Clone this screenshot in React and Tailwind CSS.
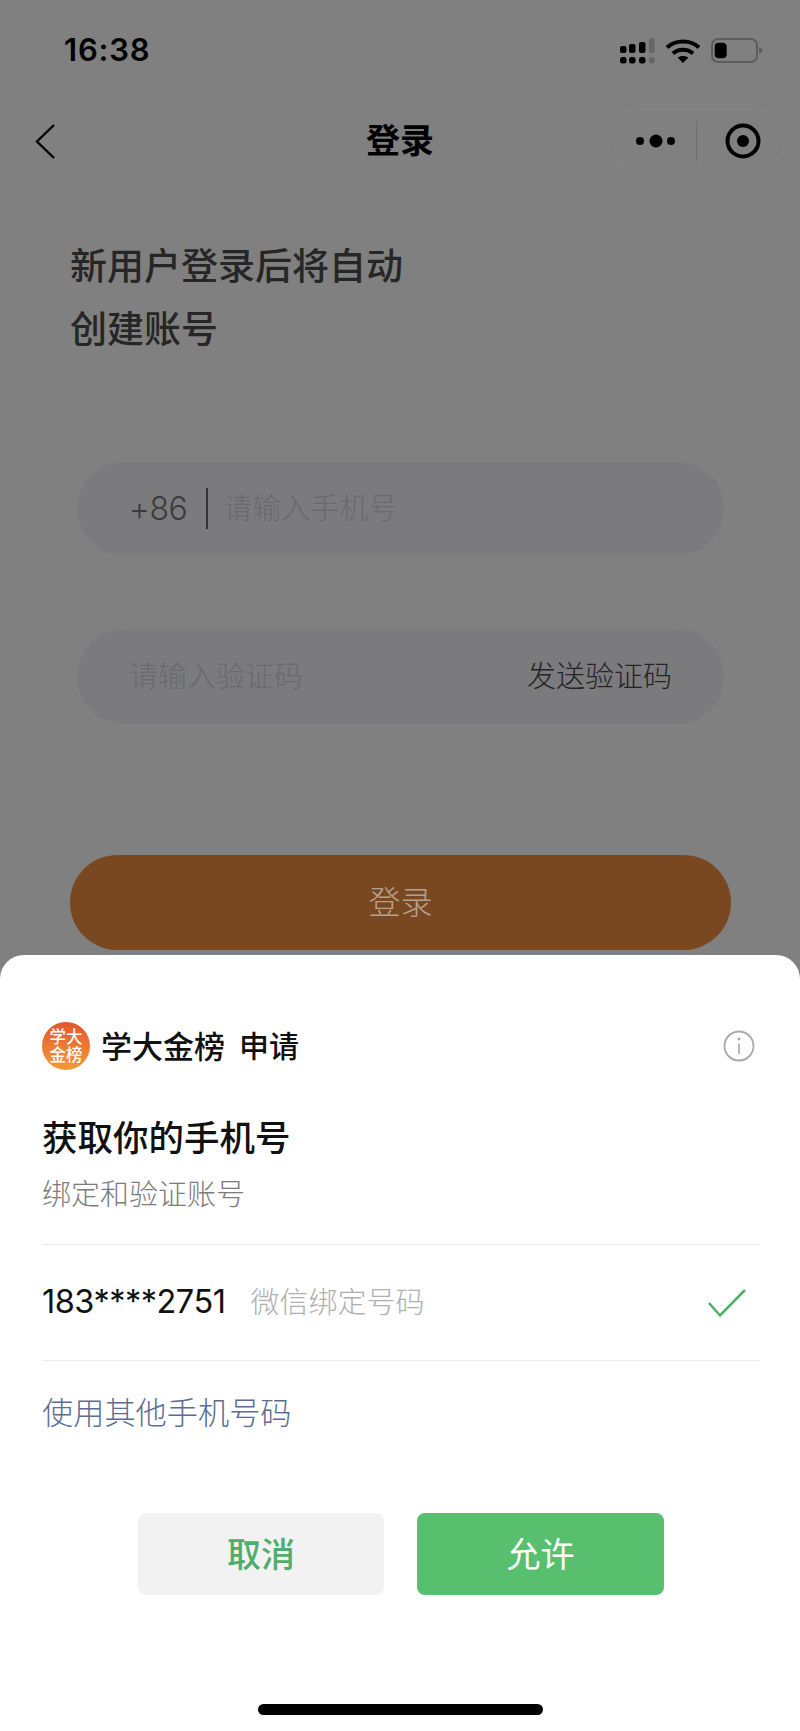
const CJK = "font-['Inter','Noto_Sans_CJK_SC',sans-serif]";

function SignalIcon() {
  const top = [[1, 8, 7], [10, 6, 9], [20, 4, 11]];
  const low = [1, 10, 20];
  return (
    <svg width="36" height="26" viewBox="0 0 36 26">
      {top.map(([x, y, h]) => (
        <rect key={x} x={x} y={y} width="6.500" height={h} rx="2" fill="#000" />
      ))}
      <rect x="30" y="0" width="5.500" height="15" rx="2.500" fill="#666" />
      {low.map((x) => (
        <rect key={x} x={x} y="19" width="6.500" height="6.500" rx="2.500" fill="#000" />
      ))}
      <rect x="30" y="19" width="5.500" height="6.500" rx="2.500" fill="#666" />
    </svg>
  );
}

function WifiIcon() {
  return (
    <svg width="36" height="26" viewBox="0 0 36 26" fill="none" stroke="#000" strokeWidth="4">
      <path d="M2 9.500C10.500 1.500 25.500 1.500 34 9.500" />
      <path d="M8 15.500C13.500 10.500 22.500 10.500 28 15.500" />
      <path d="M17.900 25L12.500 19.600C15.500 17.300 20.500 17.300 23.500 19.600Z" fill="#000" stroke="none" />
    </svg>
  );
}

function BatteryIcon() {
  return (
    <svg width="52" height="26" viewBox="0 0 52 26">
      <rect x="1" y="1" width="45" height="23" rx="6" fill="none" stroke="#5c5c5c" strokeWidth="2" />
      <rect x="3.700" y="4.700" width="12" height="15.500" rx="4" fill="#000" />
      <path d="M48 9.500C50 10.200 51.500 11.200 51.500 12.500C51.500 13.800 50 14.800 48 15.500Z" fill="#5c5c5c" />
    </svg>
  );
}

function StatusBar() {
  return (
    <div className="h-[100px] pt-[34px] pl-[64px] pr-[37px] flex items-start justify-between">
      <span className="font-['Inter',sans-serif] font-semibold text-[31px] leading-[32px] text-black tracking-[0.8px]">16:38</span>
      <div className="flex items-center gap-[10px] pt-[4px]">
        <SignalIcon />
        <WifiIcon />
        <BatteryIcon />
      </div>
    </div>
  );
}

function NavBar() {
  return (
    <div className="h-[84px] mt-[-1px] px-[16px] grid grid-cols-[1fr_auto_1fr] items-center">
      <svg width="22" height="36" viewBox="0 0 22 36" fill="none" stroke="#000" strokeWidth="2.400" className="ml-[18px]">
        <path d="M20 2L3 18.500L20 35" />
      </svg>
      <span className={`${CJK} text-[34px] font-bold text-black leading-none`}>登录</span>
      <div className="justify-self-end w-[176px] h-[66px] rounded-full border border-[#858585] flex items-center">
        <div className="flex-1 flex items-center justify-center">
          <svg width="40" height="14" viewBox="0 0 40 14" fill="#000" className="ml-[8px]">
            <circle cx="4" cy="7" r="4" />
            <circle cx="20" cy="7" r="6.500" />
            <circle cx="35" cy="7" r="4" />
          </svg>
        </div>
        <div className="w-px h-[40px] bg-[#6f6f6f]" />
        <div className="flex-1 flex items-center justify-center">
          <svg width="36" height="36" viewBox="0 0 36 36" className="ml-[6px]">
            <circle cx="18" cy="18" r="15.500" fill="none" stroke="#000" strokeWidth="4" />
            <circle cx="18" cy="18" r="6" fill="#000" />
          </svg>
        </div>
      </div>
    </div>
  );
}

function LoginForm() {
  return (
    <div className="px-[70px]">
      <h1 className={`${CJK} mt-[52px] text-[37px] leading-[63px] font-medium text-[#262626]`}>
        新用户登录后将自动<br />创建账号
      </h1>
      <div className="mt-[101px] ml-[7px] w-[647px] h-[93px] rounded-full bg-[#7b7b7d] flex items-center pl-[52px]">
        <span className="font-['Inter',sans-serif] font-light text-[32px] leading-none text-[#3b3b3b] tracking-[-0.500px]">+86</span>
        <span className="ml-[19px] w-[2px] h-[41px] bg-[#333]" />
        <span className={`${CJK} ml-[15px] text-[29px] font-light text-[#6a6a6c]`}>请输入手机号</span>
      </div>
      <div className="mt-[74px] ml-[7px] w-[647px] h-[95px] rounded-full bg-[#7b7b7d] flex items-center justify-between pl-[52px] pr-[52px]">
        <span className={`${CJK} text-[29px] font-light text-[#6a6a6c]`}>请输入验证码</span>
        <span className={`${CJK} text-[29px] font-light text-[#242424]`}>发送验证码</span>
      </div>
      <button className={`${CJK} mt-[131px] w-[661px] h-[95px] rounded-full bg-[#7a4820] text-[32px] font-light text-[#b3a294] flex items-center justify-center`}>
        登录
      </button>
    </div>
  );
}

function PermissionSheet() {
  return (
    <div className={`${CJK} bg-white rounded-t-[24px] mt-[5px] flex-1 flex flex-col px-[42px] relative`}>
      <div className="mt-[67px] flex items-center h-[48px]">
        <div className="w-[48px] h-[48px] rounded-full bg-gradient-to-b from-[#e2552c] to-[#f39b38] flex flex-col items-center justify-center text-white text-[16.500px] leading-[18px] font-medium shrink-0">
          <span>学大</span>
          <span>金榜</span>
        </div>
        <span className="ml-[11px] text-[31px] leading-none font-medium text-[#111]">学大金榜</span>
        <span className="ml-[14px] text-[30px] leading-none font-medium text-[#111]">申请</span>
        <svg width="32" height="32" viewBox="0 0 32 32" fill="none" stroke="#a8a8a8" strokeWidth="1.800" className="ml-auto mr-[3px]">
          <circle cx="16" cy="16" r="14.500" />
          <path d="M16 13.500V24" strokeWidth="1.600" />
          <circle cx="16" cy="9" r="1.400" fill="#a8a8a8" stroke="none" />
        </svg>
      </div>
      <h2 className="mt-[46px] text-[35.500px] leading-[46px] font-medium text-[#111]">获取你的手机号</h2>
      <p className="mt-[12px] text-[29px] leading-[42px] font-light text-[#7c7c7c]">绑定和验证账号</p>
      <div className="mt-[28px] h-px bg-[#ececec] mr-[-2px]" />
      <div className="h-[115px] flex items-center mr-[-2px]">
        <span className="font-['Inter',sans-serif] font-normal text-[32.500px] leading-none text-[#111] tracking-[-0.500px]">183****2751</span>
        <span className="ml-[25px] text-[29px] font-light text-[#b0b0b0]">微信绑定号码</span>
        <svg width="40" height="30" viewBox="0 0 40 30" fill="none" stroke="#4fae6c" strokeWidth="2.500" className="ml-auto mr-[13px]">
          <path d="M2 15L13 27.500L38 2" />
        </svg>
      </div>
      <div className="h-px bg-[#ececec] mr-[-2px]" />
      <a className="mt-[30px] text-[31.200px] leading-[44px] font-light text-[#5d6d92]">使用其他手机号码</a>
      <div className="mt-[78px] ml-[2px] flex justify-center gap-[33px]">
        <button className="w-[246px] h-[82px] rounded-[8px] bg-[#f2f2f2] text-[34px] font-medium text-[#4fae6c]">取消</button>
        <button className="w-[247px] h-[82px] rounded-[8px] bg-[#58bf6e] text-[34px] font-normal text-white">允许</button>
      </div>
      <div className="absolute left-[258px] bottom-[16px] w-[285px] h-[11px] rounded-full bg-black" />
    </div>
  );
}

export default function App() {
  return (
    <div className="w-[800px] h-[1731px] bg-[#808080] flex flex-col overflow-hidden">
      <StatusBar />
      <NavBar />
      <LoginForm />
      <PermissionSheet />
    </div>
  );
}
